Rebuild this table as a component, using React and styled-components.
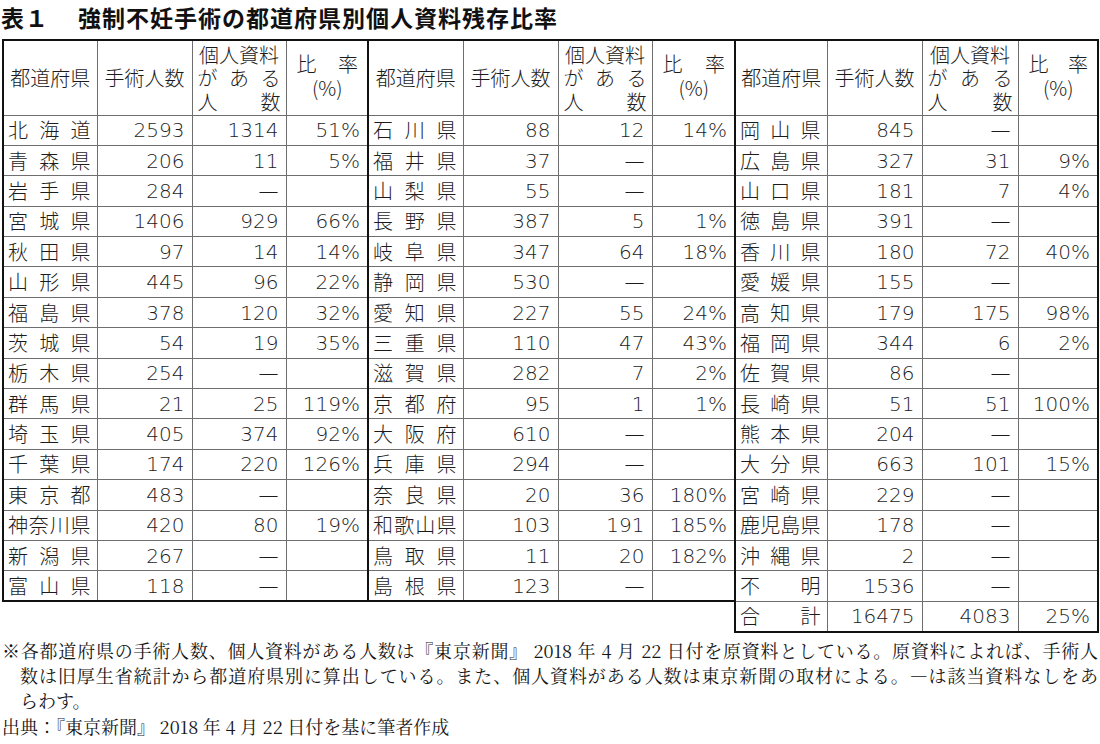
import React from 'react'
import styled, { createGlobalStyle } from 'styled-components'

const GlobalStyle = createGlobalStyle`
  body {
    margin: 0;
    background: #fff;
    color: #1c1c1c;
    font-family: "Noto Sans CJK JP", sans-serif;
  }
`

const left = [
  ['北海道', 2593, 1314, '51%'],
  ['青森県', 206, 11, '5%'],
  ['岩手県', 284, null, ''],
  ['宮城県', 1406, 929, '66%'],
  ['秋田県', 97, 14, '14%'],
  ['山形県', 445, 96, '22%'],
  ['福島県', 378, 120, '32%'],
  ['茨城県', 54, 19, '35%'],
  ['栃木県', 254, null, ''],
  ['群馬県', 21, 25, '119%'],
  ['埼玉県', 405, 374, '92%'],
  ['千葉県', 174, 220, '126%'],
  ['東京都', 483, null, ''],
  ['神奈川県', 420, 80, '19%'],
  ['新潟県', 267, null, ''],
  ['富山県', 118, null, ''],
]

const middle = [
  ['石川県', 88, 12, '14%'],
  ['福井県', 37, null, ''],
  ['山梨県', 55, null, ''],
  ['長野県', 387, 5, '1%'],
  ['岐阜県', 347, 64, '18%'],
  ['静岡県', 530, null, ''],
  ['愛知県', 227, 55, '24%'],
  ['三重県', 110, 47, '43%'],
  ['滋賀県', 282, 7, '2%'],
  ['京都府', 95, 1, '1%'],
  ['大阪府', 610, null, ''],
  ['兵庫県', 294, null, ''],
  ['奈良県', 20, 36, '180%'],
  ['和歌山県', 103, 191, '185%'],
  ['鳥取県', 11, 20, '182%'],
  ['島根県', 123, null, ''],
]

const right = [
  ['岡山県', 845, null, ''],
  ['広島県', 327, 31, '9%'],
  ['山口県', 181, 7, '4%'],
  ['徳島県', 391, null, ''],
  ['香川県', 180, 72, '40%'],
  ['愛媛県', 155, null, ''],
  ['高知県', 179, 175, '98%'],
  ['福岡県', 344, 6, '2%'],
  ['佐賀県', 86, null, ''],
  ['長崎県', 51, 51, '100%'],
  ['熊本県', 204, null, ''],
  ['大分県', 663, 101, '15%'],
  ['宮崎県', 229, null, ''],
  ['鹿児島県', 178, null, ''],
  ['沖縄県', 2, null, ''],
  ['不明', 1536, null, ''],
]

const widths = [94, 95, 94, 82, 95, 95, 94, 83, 92, 95, 96, 80]

function Spread({ text }) {
  return (
    <SpreadLine>
      {[...text].map((c, i) => <span key={i}>{c}</span>)}
    </SpreadLine>
  )
}

function HeaderGroup({ first }) {
  return (
    <>
      <Head $thickLeft={first}>都道府県</Head>
      <Head>手術人数</Head>
      <Head>
        <Stack>
          <div>個人資料</div>
          <Spread text="がある" />
          <Spread text="人数" />
        </Stack>
      </Head>
      <Head $ratio>
        <Stack>
          <Spread text="比率" />
          <Centered>(%)</Centered>
        </Stack>
      </Head>
    </>
  )
}

function DataGroup({ row, first, last, bottom }) {
  const [name, ops, docs, ratio] = row
  return (
    <>
      <Name $thickLeft={first} $thickBottom={bottom}><Spread text={name} /></Name>
      <Num $thickBottom={bottom}>{ops}</Num>
      <Num $thickBottom={bottom}>{docs == null ? '—' : docs}</Num>
      <Num $thickBottom={bottom} $thickRight={last}>{ratio}</Num>
    </>
  )
}

export default function App() {
  return (
    <Page lang="ja">
      <GlobalStyle />
      <Title>
        <span>表１</span>
        <TitleText>強制不妊手術の都道府県別個人資料残存比率</TitleText>
      </Title>
      <Table>
        <colgroup>
          {widths.map((w, i) => <col key={i} style={{ width: w }} />)}
        </colgroup>
        <tbody>
          <HeadRow>
            <HeaderGroup first />
            <HeaderGroup first />
            <HeaderGroup first />
          </HeadRow>
          {left.map((row, i) => (
            <Row key={i}>
              <DataGroup row={row} first bottom={i === left.length - 1} />
              <DataGroup row={middle[i]} first bottom={i === left.length - 1} />
              <DataGroup row={right[i]} first last />
            </Row>
          ))}
          <Row>
            {Array.from({ length: 8 }).map((_, i) => <Blank key={i} />)}
            <Name $thickLeft $thickBottom><Spread text="合計" /></Name>
            <Num $thickBottom>16475</Num>
            <Num $thickBottom>4083</Num>
            <Num $thickBottom $thickRight>25%</Num>
          </Row>
        </tbody>
      </Table>
      <Notes>
        <Justified $mark>※各都道府県の手術人数、個人資料がある人数は『東京新聞』 2018 年 4 月 22 日付を原資料としている。原資料によれば、手術人</Justified>
        <Justified>数は旧厚生省統計から都道府県別に算出している。また、個人資料がある人数は東京新聞の取材による。—は該当資料なしをあ</Justified>
        <NoteLine $indent>らわす。</NoteLine>
        <NoteLine>出典：『東京新聞』 2018 年 4 月 22 日付を基に筆者作成</NoteLine>
      </Notes>
    </Page>
  )
}

const Page = styled.div`
  width: 1100px;
  padding: 2px 0 0 0;
`

const Title = styled.h1`
  margin: 0 0 0 1px;
  height: 30px;
  display: flex;
  align-items: center;
  font-size: 23px;
  font-weight: 700;
  color: #111;
  letter-spacing: 1px;
`

const TitleText = styled.span`
  margin-left: 29px;
`

const Table = styled.table`
  margin: 7px 0 0 2px;
  border-collapse: collapse;
  table-layout: fixed;
  width: 1096px;
  font-size: 20px;
  font-weight: 300;
`

const thin = '1px solid #6e6e6e'
const thick = '2.5px solid #111'

const Cell = styled.td`
  padding: 0;
  border-top: ${thin};
  border-bottom: ${p => (p.$thickBottom ? thick : thin)};
  border-left: ${p => (p.$thickLeft ? thick : thin)};
  border-right: ${p => (p.$thickRight ? thick : thin)};
  vertical-align: middle;
  white-space: nowrap;
`

const Head = styled(Cell).attrs({ as: 'th' })`
  border-top: ${thick};
  font-weight: 300;
  text-align: center;
  padding: ${p => (p.$ratio ? '0 9px 4px 10px' : '0 5px')};
  line-height: 23.5px;
`

const HeadRow = styled.tr`
  height: 75px;
  & > th:last-child {
    border-right: ${thick};
  }
`

const Row = styled.tr`
  height: 30.4px;
`

const Stack = styled.div`
  display: flex;
  flex-direction: column;
`

const SpreadLine = styled.div`
  display: flex;
  justify-content: space-between;
`

const Centered = styled.div`
  text-align: center;
`

const Name = styled(Cell)`
  padding: 0 6px 0 4px;
  line-height: 28px;
`

const Num = styled(Cell)`
  text-align: right;
  padding: 0 7px 0 0;
  font-family: "DejaVu Sans", "Noto Sans CJK JP", sans-serif;
  font-weight: 200;
  line-height: 28px;
`

const Blank = styled.td`
  border: none;
  padding: 0;
`

const Notes = styled.div`
  margin: 5px 0 0 2px;
  width: 1096px;
  font-family: "Noto Serif CJK JP", "Liberation Serif", "Noto Sans CJK JP", serif;
  font-size: 18px;
  line-height: 25.3px;
  color: #151515;
`

const NoteLine = styled.div`
  padding-left: ${p => (p.$indent ? '18px' : '0')};
`

const Justified = styled.div`
  padding-left: ${p => (p.$mark ? '0' : '18px')};
  text-align: justify;
  text-align-last: justify;
  white-space: nowrap;
`
